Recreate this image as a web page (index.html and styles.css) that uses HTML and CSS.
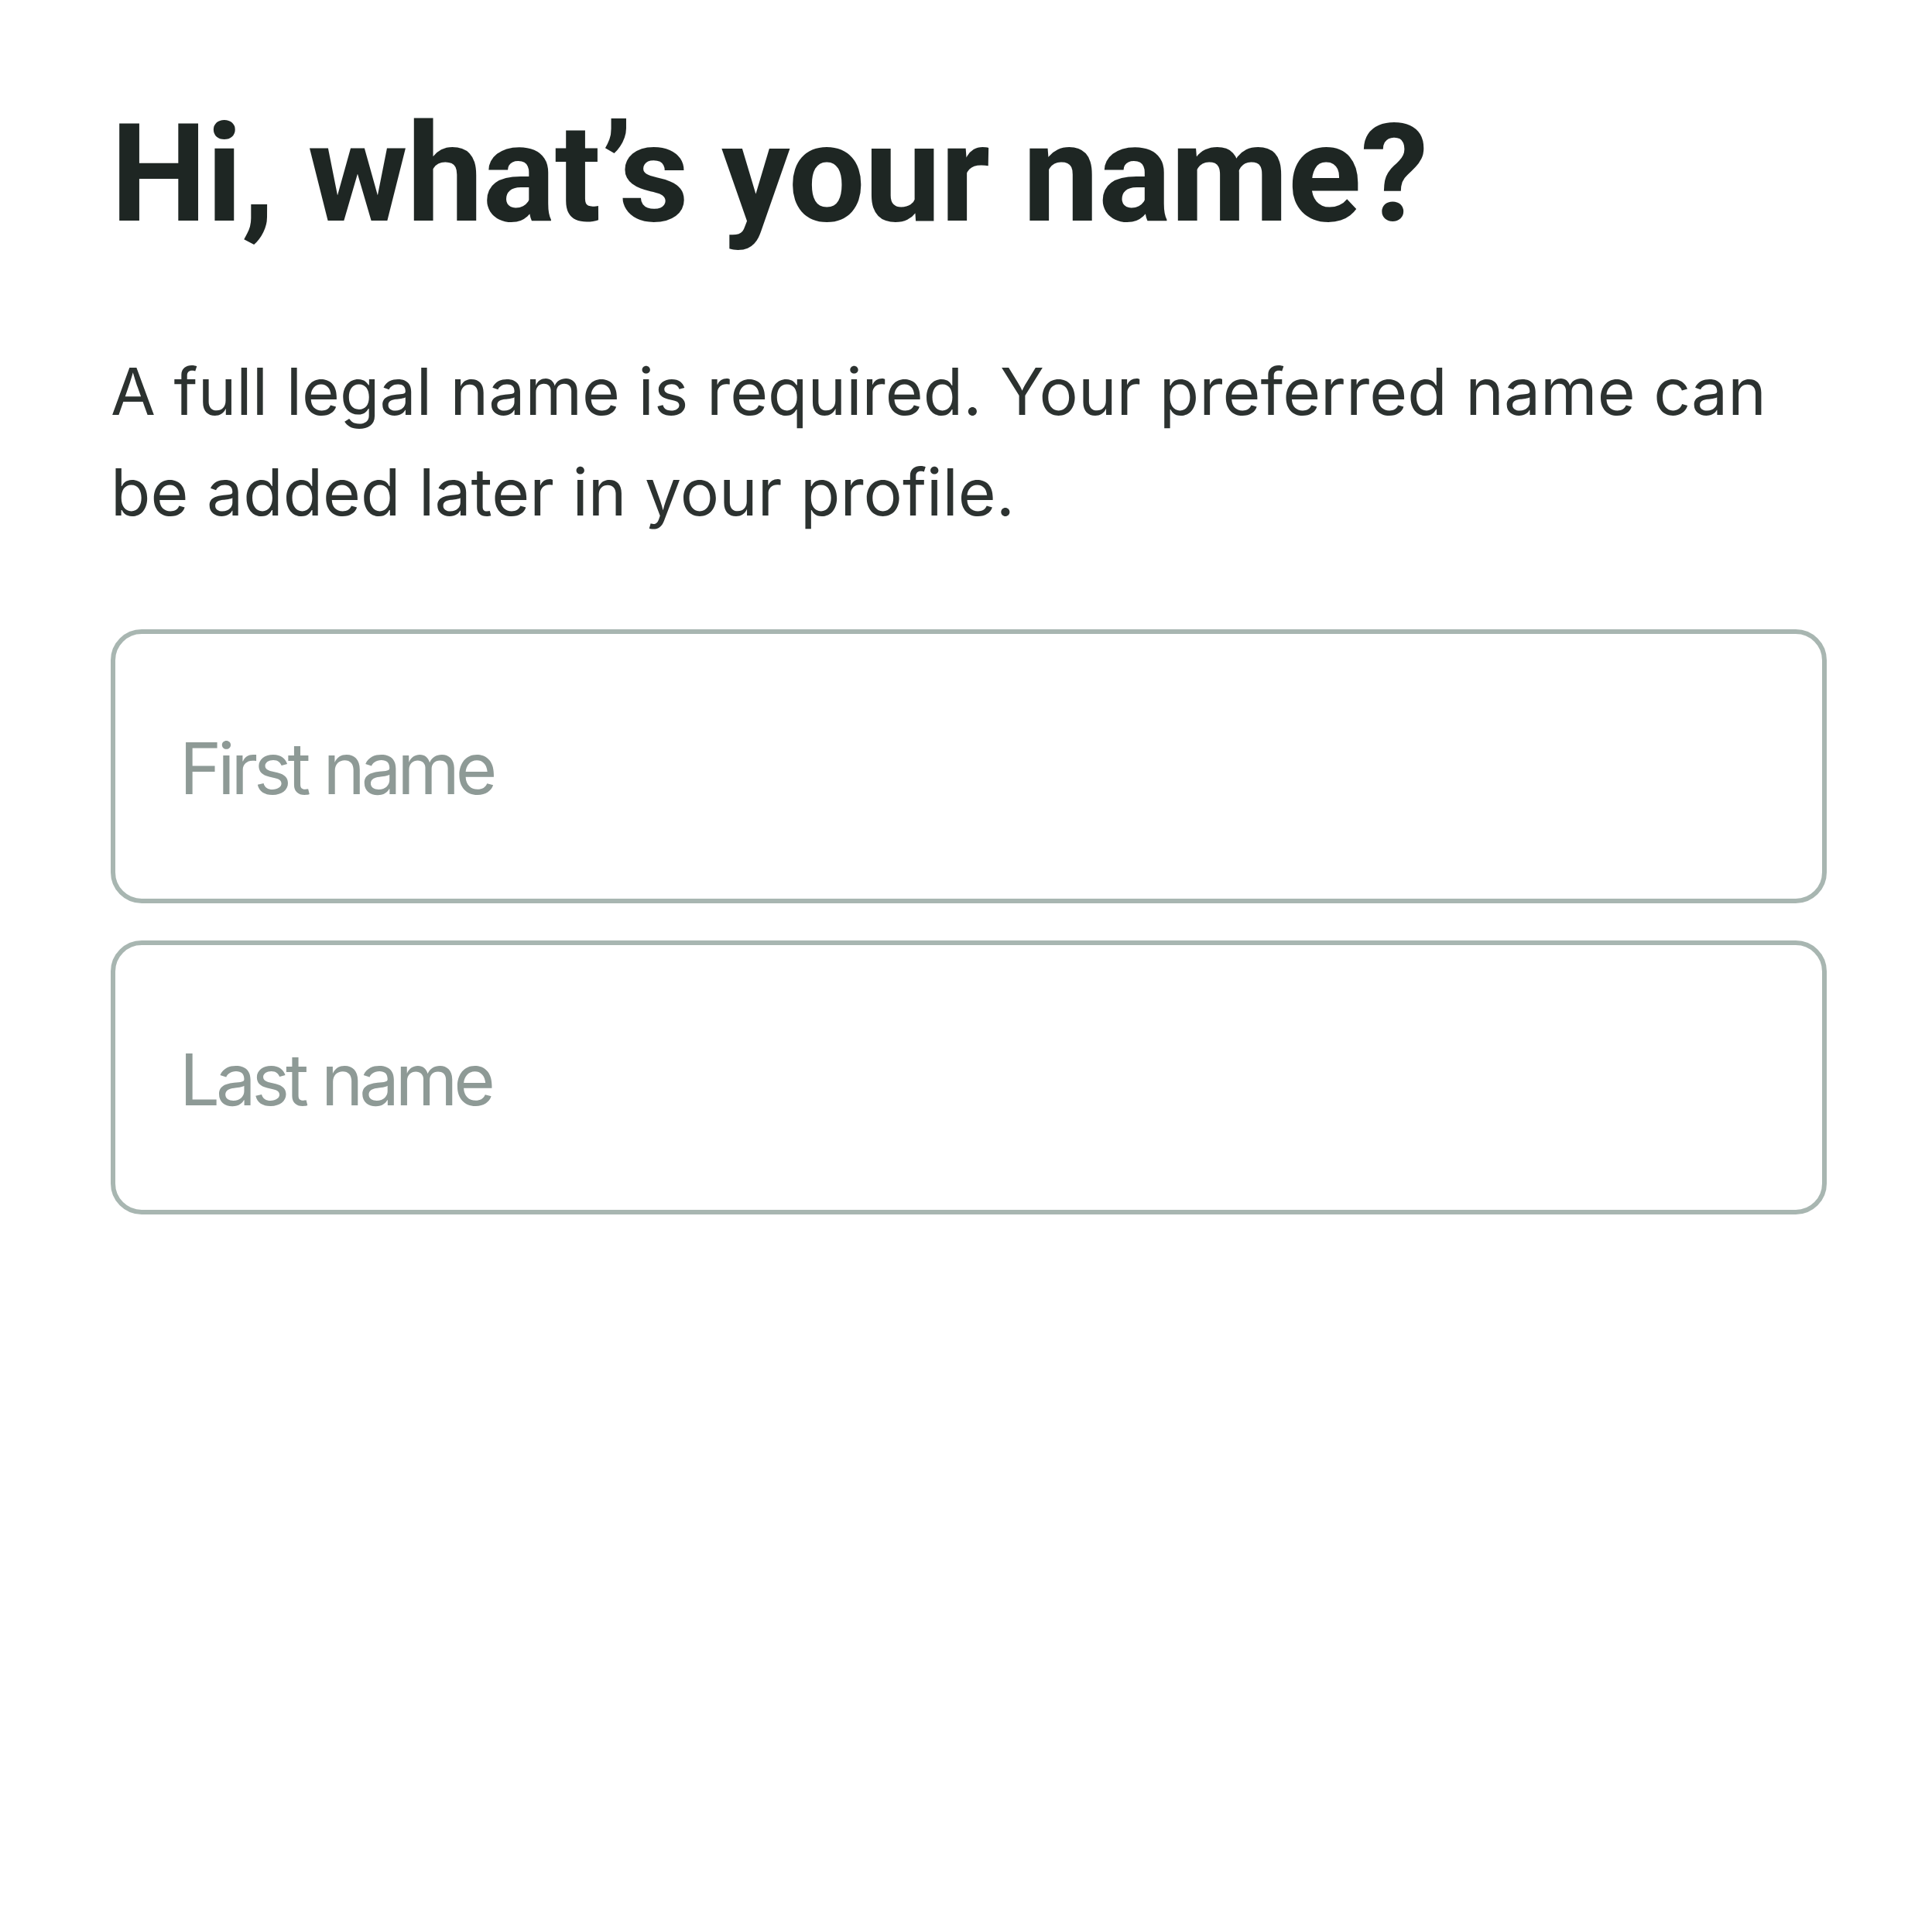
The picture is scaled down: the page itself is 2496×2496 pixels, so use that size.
FILE: index.html
```html
<!DOCTYPE html>
<html lang="en">
<head>
<meta charset="utf-8">
<title>Hi, what’s your name?</title>
<link rel="stylesheet" href="styles.css">
</head>
<body>
<main class="screen">
  <h1 class="title">Hi, what’s your name?</h1>
  <p class="lead">A full legal name is required. Your preferred name can be added later in your profile.</p>
  <form class="fields">
    <input class="field" type="text" placeholder="First name">
    <input class="field" type="text" placeholder="Last name">
  </form>
</main>
</body>
</html>
```
FILE: styles.css
```css
html, body {
  margin: 0;
  padding: 0;
  background: #ffffff;
}

.screen {
  box-sizing: border-box;
  width: 2496px;
  padding: 125px 136px 0 143px;
  display: flex;
  flex-direction: column;
}

.title {
  margin: 0;
  font-family: Roboto, "Liberation Sans", sans-serif;
  font-weight: 700;
  font-size: 176px;
  line-height: 200px;
  letter-spacing: -0.005em;
  color: #1e2623;
}

.lead {
  margin: 116px 0 0;
  max-width: 2180px;
  font-family: Inter, "Liberation Sans", sans-serif;
  font-weight: 400;
  font-size: 84px;
  line-height: 130px;
  color: #2c3230;
}

.fields {
  margin-top: 112px;
  display: flex;
  flex-direction: column;
  gap: 48px;
}

.field {
  box-sizing: border-box;
  width: 100%;
  height: 354px;
  margin: 0;
  padding: 4px 0 0 83px;
  border: 6px solid #a8b6b1;
  border-radius: 40px;
  background: #ffffff;
  outline: none;
  font-family: Inter, "Liberation Sans", sans-serif;
  font-size: 92px;
  letter-spacing: -0.055em;
  color: #1e2623;
}

.field::placeholder {
  color: #8e9a96;
  opacity: 1;
}
```
